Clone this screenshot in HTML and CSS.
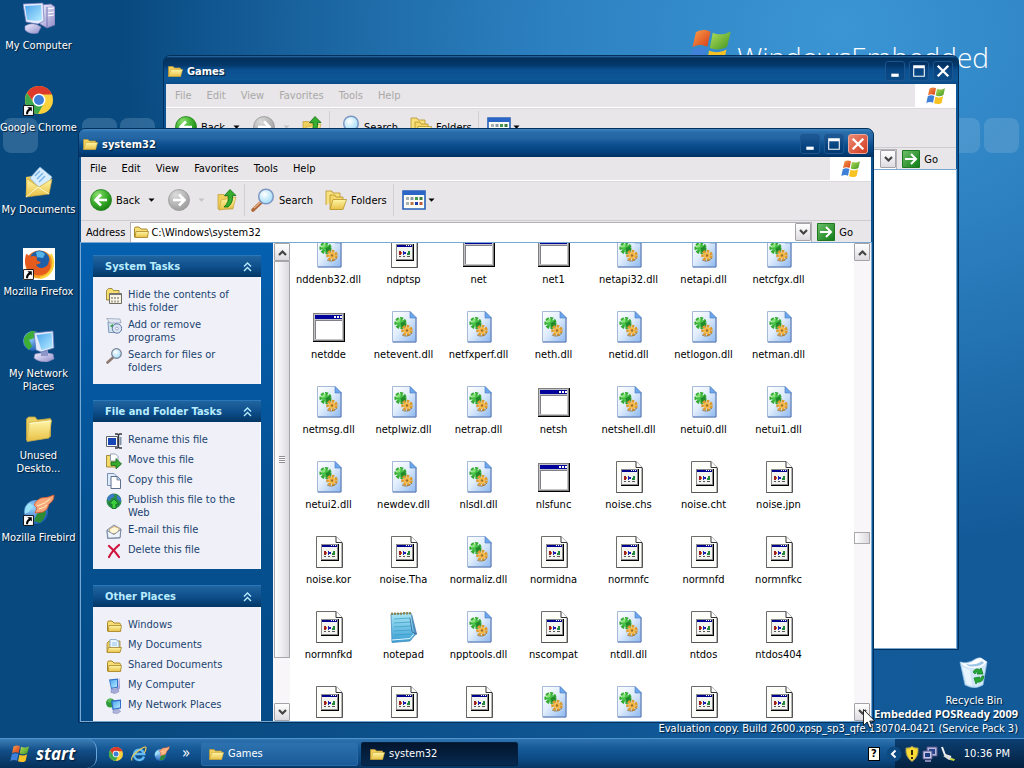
FILE: index.html
```html
<!DOCTYPE html>
<html lang="en">
  <head>
    <meta charset="UTF-8" />
    <meta name="viewport" content="width=device-width, initial-scale=1.0" />
    <title>Desktop</title>
    <link rel="stylesheet" href="styles.css">
  </head>
  <body>
    <!-- icon sprite -->
    <svg class="sprite" width="0" height="0" aria-hidden="true">
      <defs>
        <linearGradient id="g-page" x1="0" y1="0" x2="1" y2="1"><stop offset="0" stop-color="#fff" /><stop offset=".45" stop-color="#e2eefc" /><stop offset="1" stop-color="#8db8f0" /></linearGradient>
        <linearGradient id="g-folder" x1="0" y1="0" x2="0" y2="1"><stop offset="0" stop-color="#fff6a8" /><stop offset="1" stop-color="#e8c044" /></linearGradient>
        <linearGradient id="g-screen" x1="0" y1="0" x2="1" y2="1"><stop offset="0" stop-color="#4aa4ee" /><stop offset="1" stop-color="#b6ecff" /></linearGradient>
        <linearGradient id="g-case" x1="0" y1="0" x2="1" y2="1"><stop offset="0" stop-color="#f2f1ff" /><stop offset="1" stop-color="#8f8cc8" /></linearGradient>
        <linearGradient id="g-go" x1="0" y1="0" x2="1" y2="1"><stop offset="0" stop-color="#6fc06a" /><stop offset="1" stop-color="#0d7a14" /></linearGradient>
        <linearGradient id="g-red" x1="0" y1="0" x2="1" y2="1"><stop offset="0" stop-color="#f8a04c" /><stop offset="1" stop-color="#d83a16" /></linearGradient>
        <linearGradient id="g-green" x1="0" y1="0" x2="1" y2="1"><stop offset="0" stop-color="#b5e05a" /><stop offset="1" stop-color="#3f9422" /></linearGradient>
        <linearGradient id="g-note" x1="0" y1="0" x2="0" y2="1"><stop offset="0" stop-color="#a8e6f6" /><stop offset="1" stop-color="#3a9fd4" /></linearGradient>
        <radialGradient id="g-back" cx=".35" cy=".25" r=".85"><stop offset="0" stop-color="#8ee072" /><stop offset=".5" stop-color="#3cae2c" /><stop offset="1" stop-color="#13760f" /></radialGradient>
        <radialGradient id="g-fwd" cx=".35" cy=".25" r=".85"><stop offset="0" stop-color="#dcdcdc" /><stop offset="1" stop-color="#969696" /></radialGradient>
        <radialGradient id="g-lens" cx=".4" cy=".35" r=".7"><stop offset="0" stop-color="#fff" /><stop offset="1" stop-color="#9bdaf6" /></radialGradient>
        <radialGradient id="g-globe" cx=".35" cy=".3" r=".8"><stop offset="0" stop-color="#9fd8ff" /><stop offset="1" stop-color="#0d4fae" /></radialGradient>
        <radialGradient id="g-fox" cx=".4" cy=".4" r=".7"><stop offset=".4" stop-color="#e8641c" /><stop offset="1" stop-color="#ffc427" /></radialGradient>
      </defs>

      <symbol id="flag" viewBox="0 0 20 18">
        <path d="M3.500 1.500C6 .1 8 .3 10 1.300L8.600 8C6.400 7 4.300 7 2 8.200z" fill="url(#g-red)" />
        <path d="M11 1.800c2.500 1 5 1 8-.6L17.400 8c-2.700 1.500-5.200 1.500-7.700.6z" fill="url(#g-green)" />
        <path d="M1.800 9.200c2.400-1.200 4.500-1.200 6.600-.1L7 15.700C5 14.700 3 14.600.3 16z" fill="#3f80d8" />
        <path d="M9.400 9.700c2.400 1 4.900 1 7.700-.5l-1.500 6.700c-2.500 1.500-5 1.500-7.600.4z" fill="#f8c322" />
      </symbol>

      <symbol id="folder" viewBox="0 0 16 16">
        <path d="M1.500 13V4.500q0-1.500 1.500-1.500h3l2 2h5q1.500 0 1.500 1.500V13z" fill="#f6dd74" stroke="#a8862a" />
        <path d="M3 7.500h12.500l-1 6H2z" fill="url(#g-folder)" stroke="#a8862a" stroke-width=".8" />
      </symbol>

      <symbol id="folder-open" viewBox="0 0 16 16">
        <path d="M1.500 13V3.500h4.500l1.500 1.500h6V13z" fill="#f0cf5c" stroke="#c09a30" stroke-width=".7" />
        <path d="M4 6.500h11.600l-2 7H1.500z" fill="url(#g-folder)" stroke="#d0a838" stroke-width=".6" />
      </symbol>

      <symbol id="folder-big" viewBox="0 0 32 32">
        <path d="M3.500 28V7l2-2h6.500l2.500 3 13-1.500v18z" fill="#e9cf62" stroke="#c7a63e" stroke-width=".8" />
        <path d="M6 10.500L28.500 8 26 26 4 29.500z" fill="url(#g-folder)" stroke="#d3b34a" stroke-width=".8" />
        <path d="M6.500 11.500L27.500 9" stroke="#fffbd0" />
      </symbol>

      <symbol id="shortcut" viewBox="0 0 10 10">
        <path d="M.5.5h9v9h-9z" fill="#fff" stroke="#000" stroke-width=".8" />
        <path d="M4 2h4v4L6.800 4.800Q4.500 6 4.500 8.300H2.800Q2.500 5 5.300 3.300z" fill="#000" />
      </symbol>

      <symbol id="dll" viewBox="0 0 32 32">
        <path d="M4.500.5H22l6 6v24.500H4.500z" fill="url(#g-page)" stroke="#a5bad8" />
        <path d="M28 7v24H5" fill="none" stroke="#5577b4" />
        <path d="M22 .5l6.500 6.500H22z" fill="#6aa7ee" stroke="#4b79bd" stroke-width=".6" />
        <circle cx="12.500" cy="12" r="3.500" fill="#48c248" />
        <circle cx="12.500" cy="12" r="4.600" fill="none" stroke="#35ab33" stroke-width="3" stroke-dasharray="3 1.130" />
        <path d="M8 12q1-4 5-5l-1 4z" fill="#8ae27a" />
        <path d="M12.500 12l5-2v7l-4-1z" fill="#218a2a" />
        <circle cx="19" cy="19.500" r="4.300" fill="none" stroke="#dd9a2c" stroke-width="3" stroke-dasharray="2.700 1.150" />
        <circle cx="19" cy="19.500" r="3.300" fill="#f6bb4c" />
        <circle cx="19" cy="19.500" r="1.200" fill="#9c6f2a" />
        <path d="M14 24q5 3 10-2" fill="none" stroke="#8d7347" stroke-width=".8" />
      </symbol>

      <symbol id="exe" viewBox="0 0 32 32">
        <g shape-rendering="crispEdges">
          <path d="M0 2h32v29H0z" fill="#000" />
          <path d="M0 2h31v28H0z" fill="#808080" />
          <path d="M1 3h29v26H1z" fill="#c3c3c8" />
          <path d="M2 4h27v4H2z" fill="#00009a" />
          <path d="M21 5h2v2h-2zm3 0h2v2h-2zm3 0h2v2h-2z" fill="#fff" />
          <path d="M2 9h27v19H2z" fill="#808088" />
          <path d="M3 10h26v18H3z" fill="#fff" />
        </g>
      </symbol>

      <symbol id="cfg" viewBox="0 0 32 32">
        <path d="M3.500.5H23l6 6v25H3.500z" fill="#fdfdfa" stroke="#6c6c6c" />
        <path d="M23 .5v6h6" fill="#fff" stroke="#333" />
        <path d="M29.500 7v24.500h-26" fill="none" stroke="#555" />
        <g shape-rendering="crispEdges">
          <path d="M8 8h18v17H8z" fill="#000" />
          <path d="M8 8h17v16H8z" fill="#8c8c8c" />
          <path d="M9 9h15v14H9z" fill="#f3f3ef" />
          <path d="M9 9h15v2H9z" fill="#000090" />
          <path d="M18 9h1v1h-1zm2 0h1v1h-1zm2 0h1v1h-1z" fill="#fff" />
          <path d="M11 15h2v4h-2z" fill="#9c2020" />
          <path d="M13 16h1v2h-1z" fill="#e06020" />
          <path d="M15 15h1v4h-1zm1 1h2v2h-2z" fill="#2020b0" />
          <path d="M20 15h2v4h-3v-2h1z" fill="#208838" />
          <path d="M11 20h2v1h-2zm4 0h2v1h-2zm4 0h3v1h-3z" fill="#555" />
        </g>
      </symbol>

      <symbol id="notepad" viewBox="0 0 32 32">
        <path d="M24 3l5 20-3 2-4 1z" fill="#5688bb" />
        <path d="M3 3l20-1 4 22-5 6-18 1.500z" fill="url(#g-note)" stroke="#4a8cb8" stroke-width=".8" />
        <path d="M4 29l18-1.500 3.500-4" fill="none" stroke="#e2f6ff" />
        <path d="M6 8l16-1M6 12l17-1M6 16l18-1M6 20l18-1M6 24l18-1" stroke="#2f93c0" stroke-width=".6" />
        <path d="M22 7l2 14 5 2" fill="none" stroke="#3b6a9c" stroke-width=".8" />
        <path d="M4 4V1.500M7 4V1.500M10 4V1.500M13 4V1.500M16 3.500V1M19 3.500V1M22 3.500V1" stroke="#8b7c3a" stroke-width="1.600" />
      </symbol>

      <symbol id="back" viewBox="0 0 22 22">
        <circle cx="11" cy="11" r="10.500" fill="url(#g-back)" stroke="#1d7f17" stroke-width=".8" />
        <path d="M17 11H6M11 5.500L5.500 11l5.500 5.500" fill="none" stroke="#fff" stroke-width="2.600" />
      </symbol>

      <symbol id="forward" viewBox="0 0 22 22">
        <circle cx="11" cy="11" r="10.500" fill="url(#g-fwd)" stroke="#999" stroke-width=".8" />
        <path d="M5 11h11M11 5.500l5.500 5.500-5.500 5.500" fill="none" stroke="#fff" stroke-width="2.600" />
      </symbol>

      <symbol id="up" viewBox="0 0 22 22">
        <path d="M2 8V5.500h6l1 2h8V20H2z" fill="#f0cf5c" stroke="#bf9b35" stroke-width=".7" />
        <path d="M5 11l15-3-3 11-14 2z" fill="url(#g-folder)" stroke="#c9a43a" stroke-width=".7" />
        <path d="M14 .5l6 6h-3.500q1 7-4.500 11.500H8Q13.500 13 12 6.500H8.500z" fill="#36ad31" stroke="#12700f" stroke-width=".8" />
      </symbol>

      <symbol id="search" viewBox="0 0 24 24">
        <path d="M10 14.500l-8 7.500" stroke="#b06a3c" stroke-width="3.600" stroke-linecap="round" />
        <path d="M10 13.500l-7 6.500" stroke="#e8b48c" stroke-width="1.200" />
        <circle cx="15" cy="8.500" r="7.300" fill="url(#g-lens)" stroke="#7d97c4" stroke-width="1.500" />
      </symbol>

      <symbol id="search-small" viewBox="0 0 16 16">
        <path d="M7 9.500L1.500 14.500" stroke="#8e7872" stroke-width="2.600" stroke-linecap="round" />
        <circle cx="10.500" cy="5.500" r="4.800" fill="url(#g-lens)" stroke="#777f91" stroke-width="1.200" />
      </symbol>

      <symbol id="folders" viewBox="0 0 22 22">
        <path d="M1 16V2h6l1 2h7v4" fill="#f8e27e" stroke="#b8932c" stroke-width=".8" />
        <path d="M5 20V6h5l1 2h7v12z" fill="#f5d968" stroke="#b8932c" stroke-width=".8" />
        <path d="M8 10.500h13.500L18 20.500H5z" fill="url(#g-folder)" stroke="#b8932c" stroke-width=".8" />
      </symbol>

      <symbol id="views" viewBox="0 0 24 20">
        <path d="M1 1h22v18H1z" fill="#fdfdf6" stroke="#2760b8" stroke-width="1.600" />
        <path d="M1 1h22v4H1z" fill="#2b66c6" />
        <path d="M4 7h3v3H4zm0 5h3v3H4z" fill="#a9b2b0" />
        <path d="M8.500 7h3v3h-3z" fill="#8b98a8" /><path d="M13 7h3v3h-3z" fill="#3f9a4c" /><path d="M17.500 7h3v3h-3z" fill="#3c7a42" />
        <path d="M8.500 12h3v3h-3z" fill="#b8764a" /><path d="M13 12h3v3h-3z" fill="#1f3da8" /><path d="M17.500 12h3v3h-3z" fill="#c0573c" />
      </symbol>

      <symbol id="go" viewBox="0 0 18 18">
        <path d="M.5.500h17v17H.5z" fill="url(#g-go)" stroke="#1d7a22" />
        <path d="M3 9h10.500M9 4l5 5-5 5" fill="none" stroke="#fff" stroke-width="2" />
      </symbol>

      <symbol id="computer" viewBox="0 0 32 32">
        <path d="M17 3l11-1 4 3v18l-8 3-7-4z" fill="url(#g-case)" stroke="#716fae" stroke-width=".7" />
        <path d="M24 7l7-1M24 11l7-1M24 14l7-1" stroke="#fff" />
        <path d="M24 5v20" stroke="#7472b4" />
        <path d="M2 24q8-5 16 1l-3 6q-8 2-13-3z" fill="url(#g-case)" stroke="#8886c0" stroke-width=".6" />
        <path d="M0 2l20-1 1 18-6 3L3 20z" fill="#e9ecff" stroke="#6c7ab8" stroke-width=".7" />
        <path d="M2 4l16-1 1 15-5 1-10-1z" fill="url(#g-screen)" />
      </symbol>

      <symbol id="computer-small" viewBox="0 0 16 16">
        <path d="M10 1l4-.5v10L10 13z" fill="url(#g-case)" />
        <path d="M3 1.500l9-1v9l-7 1.500z" fill="#336fc8" />
        <path d="M4 2.500l7-.8v7l-5.500 1z" fill="url(#g-screen)" />
        <path d="M5 11.500l7-1 1 3-4 2-4-1z" fill="#a7acd8" stroke="#6f79b1" stroke-width=".5" />
      </symbol>

      <symbol id="network-small" viewBox="0 0 16 16">
        <circle cx="4.500" cy="5" r="4.500" fill="#2f9a3c" />
        <path d="M1 3q2-3 5-2L4 5z" fill="#59c254" />
        <path d="M5 2.500l10-1v9L6.500 12z" fill="#336fc8" />
        <path d="M6.500 3.800l7.500-.8v6.500l-6.500 1z" fill="url(#g-screen)" />
        <path d="M7 12.500l6-1 1.500 2-3 2-4.500-.5z" fill="#b4b8dd" stroke="#6f79b1" stroke-width=".5" />
      </symbol>

      <symbol id="chrome" viewBox="0 0 32 32">
        <circle cx="16" cy="16" r="14" fill="#fbd23c" />
        <path d="M4 9A14 14 0 0 1 29 10.500H16A6 6 0 0 0 10.500 18z" fill="#dd3a2c" />
        <path d="M4 9A14 14 0 0 0 15 30l6-11a6.500 6.500 0 0 1-10.500-.5z" fill="#3da84e" />
        <circle cx="16" cy="16" r="6.500" fill="#fff" /><circle cx="16" cy="16" r="5" fill="#3f7fd8" />
      </symbol>

      <symbol id="documents" viewBox="0 0 32 32">
        <path d="M3 30V11l6-1 2 2 15-2v14z" fill="#e8c95a" />
        <path d="M7 12L17 1l12 10-9 15z" fill="#d6edff" stroke="#86aed6" stroke-width=".8" />
        <path d="M12 10l5-5M14 13l6-6M16 16l6-6" stroke="#7ab4e8" stroke-width="1.500" />
        <path d="M3 31L4 13l12 8 13-8-3 15z" fill="url(#g-folder)" stroke="#d0a93e" stroke-width=".7" />
        <path d="M3 31l12-10 11 7" fill="none" stroke="#fff9c8" />
      </symbol>

      <symbol id="documents-small" viewBox="0 0 16 16">
        <path d="M1 14V5l2-2h11v11z" fill="#e9cd61" stroke="#a8862a" stroke-width=".8" />
        <path d="M4 10V1.500h6L13 4v6z" fill="#e8f5ff" stroke="#7c9fc4" stroke-width=".8" />
        <path d="M6 5h5M6 7h5" stroke="#89b8df" stroke-width=".8" />
        <path d="M1 14.500L2.500 9.500h13L14 14.500z" fill="url(#g-folder)" stroke="#a8862a" stroke-width=".8" />
      </symbol>

      <symbol id="firefox" viewBox="0 0 32 32">
        <path d="M0 0h32v32H0z" fill="#fff" />
        <circle cx="16.500" cy="16.500" r="14" fill="url(#g-fox)" />
        <circle cx="16.500" cy="12.500" r="10" fill="#1d5fa8" />
        <path d="M13 4q6-2 9 2l-2 4-6-1z" fill="#55b4e8" />
        <path d="M3 6q3 1 4 3 3-2 7 0-1 3 1 4l3 1q-2 3-5 2.500 2 4.500 8 3 5-2 5-8 4 9-3 14-8 4-15-1Q1 19 2 11z" fill="#e65c1e" />
        <path d="M28 6q4 8 1 15-4 8-12 9" fill="none" stroke="#ffd53c" stroke-width="2" />
      </symbol>

      <symbol id="network" viewBox="0 0 32 32">
        <circle cx="10" cy="11" r="10" fill="url(#g-globe)" />
        <path d="M3 5q6-6 10-3l-2 6-5 2 3 6-3 4Q0 15 1 8z" fill="#3eae35" />
        <path d="M12 24q9-3 18 0l1 5-7 3q-9 0-13-4z" fill="url(#g-case)" stroke="#8886c0" stroke-width=".6" />
        <path d="M18 20h7v6h-7z" fill="#8d97c8" />
        <path d="M11 3l19-2 1 17-13 4-5-2z" fill="#e2eaff" stroke="#5e79b8" stroke-width=".8" />
        <path d="M13.500 5l15-2 1 14-11 3z" fill="url(#g-screen)" />
      </symbol>

      <symbol id="firebird" viewBox="0 0 32 32">
        <circle cx="13" cy="18" r="12" fill="url(#g-globe)" />
        <path d="M14 20l8-5q3 7-5 14l-6-2z" fill="#2d8b35" />
        <path d="M2 20q-1-8 5-11l3 3-4 6z" fill="#9ce2f6" />
        <path d="M31 1q0 6-5 9-1 6-6 8l-8 1 2-5-3-3q2-5 7-7 7 0 13-3z" fill="#f7a779" stroke="#d95b2c" stroke-width=".8" />
        <path d="M14 12q8-2 13-7M16 15q5-1 8-4" fill="none" stroke="#fff0bc" />
      </symbol>

      <symbol id="ie" viewBox="0 0 16 16">
        <path d="M13 10.500A5.200 5.200 0 1 1 13.200 8H4" fill="none" stroke="#63b9f4" stroke-width="2.400" />
        <path d="M1 14.500Q-1 11 7 5t8-3q0 3-2 5" fill="none" stroke="#f4cf52" stroke-width="1.100" />
      </symbol>

      <symbol id="recycle" viewBox="0 0 32 32">
        <path d="M2 5q6 2 12-1 6-4 9-3l6 4-4 23q-6 4-13 2l-5-2z" fill="#cfe6f8" stroke="#8dbce2" stroke-width=".7" />
        <path d="M2 5q6 3 12 0 5-4 9-4l6 4q-5 6-13 6-9 0-14-6z" fill="#fff" />
        <path d="M8 7q9 2 16-3l2 2q-6 5-16 3z" fill="#9cc6e8" />
        <path d="M4 10l5 17 5 2-2-16z" fill="#eef7ff" opacity=".8" />
        <path d="M15 15q3-5 7-2l1-2 2 6h-6l1-2q-2-1-3 2zM26 19q-1 7-7 6l-1 2-2-6 6-1-1 2q2 1 3-3z" fill="#26a636" stroke="#118423" stroke-width=".8" />
      </symbol>

      <symbol id="hide" viewBox="0 0 16 16">
        <path d="M.5 12V2.500l2-2H6l1.500 2H13V12z" fill="#f4dd6a" stroke="#8b7730" stroke-width=".8" />
        <path d="M3.500 5.500h12v10h-12z" fill="#f7f4e5" stroke="#6f6c61" />
        <path d="M3.500 5.500h12V7h-12z" fill="#777" />
        <path d="M6 9v2M9 9v2M12 9v2M6 12.500v2M9 12.500v2M12 12.500v2" stroke="#8d8a7c" stroke-width="1.400" />
      </symbol>

      <symbol id="addremove" viewBox="0 0 16 16">
        <path d="M2 4h8v10.500H2.800z" fill="#cfe3ef" stroke="#7998b4" />
        <path d="M.5.500L14 1l1 4H4z" fill="#dfe6f0" stroke="#8e9bb2" stroke-width=".7" />
        <path d="M4 8l3-2v4z" fill="#32a13d" />
        <circle cx="11" cy="10.500" r="4.700" fill="#dbe4f4" stroke="#5f77a5" />
        <circle cx="11" cy="10.500" r="1.400" fill="#fff" stroke="#7d8fb4" stroke-width=".7" />
      </symbol>

      <symbol id="rename" viewBox="0 0 16 16">
        <path d="M.5 3.500h11v10H.5z" fill="#fff" stroke="#60666e" />
        <path d="M2 5h8v7H2z" fill="#1747b5" />
        <path d="M9 1h2.500l1 1 1-1H16M12.500 2v12M9 15h2.500l1-1 1 1H16" fill="none" stroke="#34383f" stroke-width="1.300" />
        <path d="M14.500 4v8" stroke="#8290a8" stroke-width="2" />
      </symbol>

      <symbol id="move" viewBox="0 0 16 16">
        <path d="M.5 14V2.500H5L6.500 4H11v10z" fill="#f2db68" stroke="#907628" stroke-width=".8" />
        <path d="M4.500 1h5L12 3.500V8H4.500z" fill="#fff" stroke="#7c8ba8" stroke-width=".8" />
        <path d="M5 9h5V5.500l5.500 5.500L10 15.800V12.500H5z" fill="#36ac2f" stroke="#17621a" stroke-width=".8" />
      </symbol>

      <symbol id="copy" viewBox="0 0 16 16">
        <path d="M1.500.5h6.500l2 2v10H1.500z" fill="#dfecfb" stroke="#6b86ac" stroke-width=".9" />
        <path d="M5 3.500h6.500L14.500 6.500v9H5z" fill="#fff" stroke="#4d6180" stroke-width=".9" />
        <path d="M11 3.500V7h3.500" fill="#b8d3f2" stroke="#4d6180" stroke-width=".7" />
      </symbol>

      <symbol id="publish" viewBox="0 0 16 16">
        <circle cx="8" cy="8" r="7.500" fill="#2a8c4a" />
        <path d="M1 6q1-4 6-5.500L9 3 5 5.500 3 8zM11 2l4 3v4l-4-3z" fill="#3d79c9" />
        <path d="M8 6l5 5h-3v4.500H6V11H3z" fill="#3cd03c" stroke="#116a20" stroke-width=".8" />
      </symbol>

      <symbol id="email" viewBox="0 0 16 16">
        <path d="M1 7l7-5 7 4-1 9-12.500.5z" fill="#c9d6e8" stroke="#6c7c98" stroke-width=".8" />
        <path d="M3.500 6L8 3.500 13 5l-1 5-8 1z" fill="#fff7d6" stroke="#d0a058" stroke-width=".8" />
        <path d="M1 7.500l7 4 6.800-5L14 14.500l-12 .7z" fill="#eef4fc" stroke="#6c7c98" stroke-width=".8" />
      </symbol>

      <symbol id="delete" viewBox="0 0 16 16">
        <path d="M3 3q6 5 10 11M13 2Q6 8 3 14" fill="none" stroke="#d0143c" stroke-width="2.200" stroke-linecap="round" />
      </symbol>

      <symbol id="collapse" viewBox="0 0 9 10">
        <path d="M1 4.500l3.500-3.500L8 4.500M1 9l3.500-3.500L8 9" fill="none" stroke="currentColor" stroke-width="1.400" />
      </symbol>

      <symbol id="chev-up" viewBox="0 0 9 7"><path d="M1 6l3.500-3.500L8 6" fill="none" stroke="currentColor" stroke-width="2.200" /></symbol>
      <symbol id="chev-down" viewBox="0 0 9 7"><path d="M1 1l3.500 3.500L8 1" fill="none" stroke="currentColor" stroke-width="2.200" /></symbol>
      <symbol id="caret" viewBox="0 0 7 4"><path d="M.5.500h6L3.500 3.800z" fill="currentColor" /></symbol>
      <symbol id="min" viewBox="0 0 17 17"><path d="M5 11h7v3H5z" fill="#fff" /></symbol>
      <symbol id="max" viewBox="0 0 17 17"><path d="M3 3h11v11H3zM4 6v7h9V6z" fill="#fff" fill-rule="evenodd" /></symbol>
      <symbol id="close" viewBox="0 0 17 17"><path d="M3.500 3.500l10 10M13.500 3.500l-10 10" stroke="#fff" stroke-width="2.200" /></symbol>
    </svg>

    <div class="desktop">
      <div class="tile tile-a"></div>
      <div class="tile tile-b"></div>
      <div class="tile tile-c"></div>
      <div class="tile tile-d"></div>
      <div class="tile tile-e"></div>

      <div class="brand">
        <svg class="brand-flag"><use href="#flag" /></svg>
        <span>WindowsEmbedded</span>
      </div>

      <div class="shortcuts">
        <a class="shortcut" href="#"><svg class="icon-32"><use href="#computer" /></svg>My Computer</a>
        <a class="shortcut" href="#"><svg class="icon-32"><use href="#chrome" /></svg><svg class="arrow"><use href="#shortcut" /></svg>Google Chrome</a>
        <a class="shortcut" href="#"><svg class="icon-32"><use href="#documents" /></svg>My Documents</a>
        <a class="shortcut" href="#"><svg class="icon-32"><use href="#firefox" /></svg><svg class="arrow"><use href="#shortcut" /></svg>Mozilla Firefox</a>
        <a class="shortcut" href="#"><svg class="icon-32"><use href="#network" /></svg>My Network<br>Places</a>
        <a class="shortcut" href="#"><svg class="icon-32"><use href="#folder-big" /></svg>Unused<br>Deskto...</a>
        <a class="shortcut" href="#"><svg class="icon-32"><use href="#firebird" /></svg><svg class="arrow"><use href="#shortcut" /></svg>Mozilla Firebird</a>
      </div>

      <div class="corner">
        <a class="shortcut" href="#"><svg class="icon-32"><use href="#recycle" /></svg>Recycle Bin</a>
        <div class="edition">Embedded POSReady 2009</div>
        <div class="build">Evaluation copy. Build 2600.xpsp_sp3_qfe.130704-0421 (Service Pack 3)</div>
      </div>

      <!-- Games window -->
      <section class="window games inactive">
        <header class="title-bar">
          <svg class="icon-16"><use href="#folder-open" /></svg>
          <h2>Games</h2>
          <button class="caption" aria-label="Minimize"><svg><use href="#min" /></svg></button>
          <button class="caption" aria-label="Maximize"><svg><use href="#max" /></svg></button>
          <button class="caption" aria-label="Close"><svg><use href="#close" /></svg></button>
        </header>
        <nav class="menu-bar">
          <button>File</button><button>Edit</button><button>View</button><button>Favorites</button><button>Tools</button><button>Help</button>
          <span class="throbber"><svg><use href="#flag" /></svg></span>
        </nav>
        <div class="toolbar">
          <button class="tool"><svg class="icon-22"><use href="#back" /></svg>Back</button>
          <button class="drop" aria-label="Back history"><svg><use href="#caret" /></svg></button>
          <button class="tool" aria-label="Forward"><svg class="icon-22"><use href="#forward" /></svg></button>
          <button class="drop dim" aria-label="Forward history"><svg><use href="#caret" /></svg></button>
          <button class="tool" aria-label="Up"><svg class="icon-22"><use href="#up" /></svg></button>
          <span class="divider"></span>
          <button class="tool"><svg class="icon-24"><use href="#search" /></svg>Search</button>
          <button class="tool"><svg class="icon-22"><use href="#folders" /></svg>Folders</button>
          <span class="divider"></span>
          <button class="tool views" aria-label="Views"><svg class="icon-24"><use href="#views" /></svg><svg class="caret"><use href="#caret" /></svg></button>
        </div>
        <div class="address-bar">
          <div class="combo">
            <svg class="icon-16"><use href="#folder" /></svg>
            <input type="text" aria-label="Address">
            <button aria-label="Show addresses"><svg><use href="#chev-down" /></svg></button>
          </div>
          <button class="go"><svg><use href="#go" /></svg>Go</button>
        </div>
        <div class="content"></div>
      </section>

      <!-- system32 window -->
      <section class="window system">
        <header class="title-bar">
          <svg class="icon-16"><use href="#folder-open" /></svg>
          <h2>system32</h2>
          <button class="caption" aria-label="Minimize"><svg><use href="#min" /></svg></button>
          <button class="caption" aria-label="Maximize"><svg><use href="#max" /></svg></button>
          <button class="caption close" aria-label="Close"><svg><use href="#close" /></svg></button>
        </header>
        <nav class="menu-bar">
          <button>File</button><button>Edit</button><button>View</button><button>Favorites</button><button>Tools</button><button>Help</button>
          <span class="throbber"><svg><use href="#flag" /></svg></span>
        </nav>
        <div class="toolbar">
          <button class="tool"><svg class="icon-22"><use href="#back" /></svg>Back</button>
          <button class="drop" aria-label="Back history"><svg><use href="#caret" /></svg></button>
          <button class="tool" aria-label="Forward"><svg class="icon-22"><use href="#forward" /></svg></button>
          <button class="drop dim" aria-label="Forward history"><svg><use href="#caret" /></svg></button>
          <button class="tool" aria-label="Up"><svg class="icon-22"><use href="#up" /></svg></button>
          <span class="divider"></span>
          <button class="tool"><svg class="icon-24"><use href="#search" /></svg>Search</button>
          <button class="tool"><svg class="icon-22"><use href="#folders" /></svg>Folders</button>
          <span class="divider"></span>
          <button class="tool views" aria-label="Views"><svg class="icon-24"><use href="#views" /></svg><svg class="caret"><use href="#caret" /></svg></button>
        </div>
        <div class="address-bar">
          <label for="address">Address</label>
          <div class="combo">
            <svg class="icon-16"><use href="#folder" /></svg>
            <input id="address" type="text" value="C:\Windows\system32">
            <button aria-label="Show addresses"><svg><use href="#chev-down" /></svg></button>
          </div>
          <button class="go"><svg><use href="#go" /></svg>Go</button>
        </div>

        <div class="content">
          <aside class="tasks">
            <div class="panel">
              <button class="panel-title">System Tasks<svg><use href="#collapse" /></svg></button>
              <div class="panel-body">
                <a href="#"><svg class="icon-16"><use href="#hide" /></svg><span>Hide the contents of this folder</span></a>
                <a href="#"><svg class="icon-16"><use href="#addremove" /></svg><span>Add or remove programs</span></a>
                <a href="#"><svg class="icon-16"><use href="#search-small" /></svg><span>Search for files or folders</span></a>
              </div>
            </div>
            <div class="panel">
              <button class="panel-title">File and Folder Tasks<svg><use href="#collapse" /></svg></button>
              <div class="panel-body">
                <a href="#"><svg class="icon-16"><use href="#rename" /></svg><span>Rename this file</span></a>
                <a href="#"><svg class="icon-16"><use href="#move" /></svg><span>Move this file</span></a>
                <a href="#"><svg class="icon-16"><use href="#copy" /></svg><span>Copy this file</span></a>
                <a href="#"><svg class="icon-16"><use href="#publish" /></svg><span>Publish this file to the Web</span></a>
                <a href="#"><svg class="icon-16"><use href="#email" /></svg><span>E-mail this file</span></a>
                <a href="#"><svg class="icon-16"><use href="#delete" /></svg><span>Delete this file</span></a>
              </div>
            </div>
            <div class="panel">
              <button class="panel-title">Other Places<svg><use href="#collapse" /></svg></button>
              <div class="panel-body">
                <a href="#"><svg class="icon-16"><use href="#folder" /></svg><span>Windows</span></a>
                <a href="#"><svg class="icon-16"><use href="#documents-small" /></svg><span>My Documents</span></a>
                <a href="#"><svg class="icon-16"><use href="#folder" /></svg><span>Shared Documents</span></a>
                <a href="#"><svg class="icon-16"><use href="#computer-small" /></svg><span>My Computer</span></a>
                <a href="#"><svg class="icon-16"><use href="#network-small" /></svg><span>My Network Places</span></a>
              </div>
            </div>
          </aside>

          <div class="scrollbar">
            <button aria-label="Scroll up"><svg><use href="#chev-up" /></svg></button>
            <div class="thumb tall"><i></i></div>
            <div class="track"></div>
            <button aria-label="Scroll down"><svg><use href="#chev-down" /></svg></button>
          </div>

          <div class="files">
            <div class="file"><svg class="icon-32"><use href="#dll" /></svg>nddenb32.dll</div>
            <div class="file"><svg class="icon-32"><use href="#cfg" /></svg>ndptsp</div>
            <div class="file"><svg class="icon-32"><use href="#exe" /></svg>net</div>
            <div class="file"><svg class="icon-32"><use href="#exe" /></svg>net1</div>
            <div class="file"><svg class="icon-32"><use href="#dll" /></svg>netapi32.dll</div>
            <div class="file"><svg class="icon-32"><use href="#dll" /></svg>netapi.dll</div>
            <div class="file"><svg class="icon-32"><use href="#dll" /></svg>netcfgx.dll</div>

            <div class="file"><svg class="icon-32"><use href="#exe" /></svg>netdde</div>
            <div class="file"><svg class="icon-32"><use href="#dll" /></svg>netevent.dll</div>
            <div class="file"><svg class="icon-32"><use href="#dll" /></svg>netfxperf.dll</div>
            <div class="file"><svg class="icon-32"><use href="#dll" /></svg>neth.dll</div>
            <div class="file"><svg class="icon-32"><use href="#dll" /></svg>netid.dll</div>
            <div class="file"><svg class="icon-32"><use href="#dll" /></svg>netlogon.dll</div>
            <div class="file"><svg class="icon-32"><use href="#dll" /></svg>netman.dll</div>

            <div class="file"><svg class="icon-32"><use href="#dll" /></svg>netmsg.dll</div>
            <div class="file"><svg class="icon-32"><use href="#dll" /></svg>netplwiz.dll</div>
            <div class="file"><svg class="icon-32"><use href="#dll" /></svg>netrap.dll</div>
            <div class="file"><svg class="icon-32"><use href="#exe" /></svg>netsh</div>
            <div class="file"><svg class="icon-32"><use href="#dll" /></svg>netshell.dll</div>
            <div class="file"><svg class="icon-32"><use href="#dll" /></svg>netui0.dll</div>
            <div class="file"><svg class="icon-32"><use href="#dll" /></svg>netui1.dll</div>

            <div class="file"><svg class="icon-32"><use href="#dll" /></svg>netui2.dll</div>
            <div class="file"><svg class="icon-32"><use href="#dll" /></svg>newdev.dll</div>
            <div class="file"><svg class="icon-32"><use href="#dll" /></svg>nlsdl.dll</div>
            <div class="file"><svg class="icon-32"><use href="#exe" /></svg>nlsfunc</div>
            <div class="file"><svg class="icon-32"><use href="#cfg" /></svg>noise.chs</div>
            <div class="file"><svg class="icon-32"><use href="#cfg" /></svg>noise.cht</div>
            <div class="file"><svg class="icon-32"><use href="#cfg" /></svg>noise.jpn</div>

            <div class="file"><svg class="icon-32"><use href="#cfg" /></svg>noise.kor</div>
            <div class="file"><svg class="icon-32"><use href="#cfg" /></svg>noise.Tha</div>
            <div class="file"><svg class="icon-32"><use href="#dll" /></svg>normaliz.dll</div>
            <div class="file"><svg class="icon-32"><use href="#cfg" /></svg>normidna</div>
            <div class="file"><svg class="icon-32"><use href="#cfg" /></svg>normnfc</div>
            <div class="file"><svg class="icon-32"><use href="#cfg" /></svg>normnfd</div>
            <div class="file"><svg class="icon-32"><use href="#cfg" /></svg>normnfkc</div>

            <div class="file"><svg class="icon-32"><use href="#cfg" /></svg>normnfkd</div>
            <div class="file"><svg class="icon-32"><use href="#notepad" /></svg>notepad</div>
            <div class="file"><svg class="icon-32"><use href="#dll" /></svg>npptools.dll</div>
            <div class="file"><svg class="icon-32"><use href="#cfg" /></svg>nscompat</div>
            <div class="file"><svg class="icon-32"><use href="#dll" /></svg>ntdll.dll</div>
            <div class="file"><svg class="icon-32"><use href="#cfg" /></svg>ntdos</div>
            <div class="file"><svg class="icon-32"><use href="#cfg" /></svg>ntdos404</div>

            <div class="file"><svg class="icon-32"><use href="#cfg" /></svg></div>
            <div class="file"><svg class="icon-32"><use href="#cfg" /></svg></div>
            <div class="file"><svg class="icon-32"><use href="#cfg" /></svg></div>
            <div class="file"><svg class="icon-32"><use href="#dll" /></svg></div>
            <div class="file"><svg class="icon-32"><use href="#dll" /></svg></div>
            <div class="file"><svg class="icon-32"><use href="#cfg" /></svg></div>
            <div class="file"><svg class="icon-32"><use href="#cfg" /></svg></div>
          </div>

          <div class="scrollbar">
            <button aria-label="Scroll up"><svg><use href="#chev-up" /></svg></button>
            <div class="track before"></div>
            <div class="thumb"></div>
            <div class="track"></div>
            <button aria-label="Scroll down"><svg><use href="#chev-down" /></svg></button>
          </div>
        </div>
      </section>

      <svg class="pointer" viewBox="0 0 12 20"><path d="M.5.500v16l3.700-3.500 2.500 6 2.500-1-2.500-6h5z" fill="#fff" stroke="#000" stroke-width=".8" /></svg>
    </div>

    <footer class="taskbar">
      <button class="start"><svg><use href="#flag" /></svg>start</button>
      <div class="quick">
        <button aria-label="Google Chrome"><svg class="icon-16"><use href="#chrome" /></svg></button>
        <button aria-label="Internet Explorer"><svg class="icon-16"><use href="#ie" /></svg></button>
        <button aria-label="Mozilla Firebird"><svg class="icon-16"><use href="#firebird" /></svg></button>
        <button class="more">»</button>
      </div>
      <div class="buttons">
        <button class="task"><svg class="icon-16"><use href="#folder-open" /></svg>Games</button>
        <button class="task pressed"><svg class="icon-16"><use href="#folder-open" /></svg>system32</button>
      </div>
      <button class="help">?</button>
      <div class="tray">
        <button aria-label="Show hidden icons">
          <svg class="icon-16" viewBox="0 0 16 16"><circle cx="8" cy="8" r="7.500" fill="#0d4a82" /><path d="M9.500 4.500L6 8l3.500 3.500" fill="none" stroke="#fff" stroke-width="2" /></svg>
        </button>
        <svg class="icon-16" viewBox="0 0 16 16"><path d="M8 .5q3 2 6 1.500 1 9-6 13.500Q1 11 2 2q3 .5 6-1.500z" fill="#f9d934" stroke="#9b9358" /><path d="M8 4v5M8 11v2" stroke="#33290a" stroke-width="2" /></svg>
        <svg class="icon-16" viewBox="0 0 16 16"><path d="M5 1h10v9H5z" fill="#b6b5da" stroke="#55548c" /><path d="M7 3h6v5H7z" fill="#26458e" /><path d="M1 5h9v8H1z" fill="#c8c7e6" stroke="#55548c" /><path d="M3 7h5v4H3z" fill="#1f3c82" /><path d="M3 15h6" stroke="#aaa9d0" stroke-width="1.500" /></svg>
        <svg class="icon-16" viewBox="0 0 16 16"><path d="M2 1l3 8 6 2" fill="none" stroke="#f2f2f2" stroke-width="2" /><path d="M3 10l5-1 5 4-4 1z" fill="#ddd" /><path d="M10 12l5 1-1 2-4-1z" fill="#c3d63a" /></svg>
        <time>10:36 PM</time>
      </div>
    </footer>
  </body>
</html>
```

FILE: styles.css
```css
:root {
  --face: #e8e6e8;
  --line: #b4b2b6;
  --frame: #0b5496;
  --frame-dark: #02305a;
  --link: #1a4470;
}

* {
  margin: 0;
  padding: 0;
  box-sizing: border-box;
}

body {
  display: flex;
  flex-direction: column;
  height: 100vh;
  overflow: hidden;
  font-family: "DejaVu Sans Condensed", "DejaVu Sans", Tahoma, sans-serif;
  font-size: 11px;
  line-height: 13px;
  color: #000;
}

button,
input {
  font: inherit;
  color: inherit;
  background: none;
  border: none;
}

a {
  color: inherit;
  text-decoration: none;
}

svg {
  display: block;
  flex: none;
}

.sprite {
  position: absolute;
}

.icon-16 {
  width: 16px;
  height: 16px;
}

.icon-22 {
  width: 22px;
  height: 22px;
}

.icon-24 {
  width: 24px;
  height: 24px;
}

.icon-32 {
  width: 32px;
  height: 32px;
}

/* Desktop */
.desktop {
  position: relative;
  flex: 1;
  overflow: hidden;
  background:
    radial-gradient(ellipse 720px 520px at 82% 4%, #3b95d4 0%, rgba(50, 136, 200, 0.85) 40%, rgba(20, 94, 156, 0) 100%),
    linear-gradient(90deg, #08497f 0%, #08497f 12%, #115999 70%, #135a98 100%);
}

.tile {
  position: absolute;
  top: 118px;
  width: 35px;
  height: 35px;
  border-radius: 8px;
  background: rgba(150, 190, 225, 0.25);
}

.tile-a {
  left: 3px;
}

.tile-b {
  left: 82px;
}

.tile-c {
  left: 120px;
}

.tile-d {
  right: 29px;
}

.tile-d {
  right: 44px;
}

.tile-e {
  right: 5px;
}

.brand {
  position: absolute;
  top: 28px;
  right: 35px;
  display: flex;
  gap: 4px;
  color: #fff;
  font-family: "Open Sans", "Noto Sans", sans-serif;
  font-size: 28px;
  font-weight: 300;
  line-height: 58px;
}

.brand-flag {
  width: 45px;
  height: 42px;
}

.shortcuts {
  position: absolute;
  top: 2px;
  left: 0;
  display: grid;
  grid-auto-rows: 82px;
  width: 77px;
}

.shortcut {
  position: relative;
  display: flex;
  flex-direction: column;
  align-items: center;
  color: #fff;
  text-align: center;
  text-shadow: 1px 1px 1px #021a33;
  white-space: nowrap;
}

.shortcut .icon-32 {
  margin-bottom: 5px;
}

.shortcut .arrow {
  position: absolute;
  top: 21px;
  left: 23px;
  width: 11px;
  height: 11px;
}

.corner {
  position: absolute;
  right: 6px;
  bottom: 3px;
  display: flex;
  flex-direction: column;
  align-items: flex-end;
  color: #fff;
  text-shadow: 1px 1px 1px #021a33;
}

.corner .shortcut {
  width: 88px;
}

.edition {
  font-family: "Open Sans", "Noto Sans", sans-serif;
  font-weight: bold;
}

.build {
  margin-top: 2px;
}

/* Windows */
.window {
  position: absolute;
  display: flex;
  flex-direction: column;
  width: 796px;
  height: 595px;
  padding: 0 2px 1px;
  border: 1px solid var(--frame-dark);
  border-radius: 7px 7px 0 0;
  background: var(--frame);
}

.games {
  top: 55px;
  left: 163px;
}

.system {
  top: 128px;
  left: 78px;
}

.title-bar {
  display: flex;
  align-items: center;
  gap: 4px;
  height: 28px;
  margin: 0 -2px;
  padding: 2px 5px 0 3px;
  border-radius: 6px 6px 0 0;
  color: #fff;
  background: linear-gradient(#3f86c0 0, #2a6dab 3px, #2465a3 9px, #0b4f8f 16px, #013f78 24px, #023060 100%);
}

.inactive .title-bar {
  background: linear-gradient(#2d6fab 0, #03305c 2px, #04386a 9px, #0b5090 14px, #0d5796 24px, #0a4a86 100%);
}

.title-bar h2 {
  flex: 1;
  font-size: 11px;
  line-height: 13px;
  text-shadow: 1px 1px 1px #001c38;
}

.caption {
  width: 20px;
  height: 20px;
  border: 1px solid #1d558f;
  border-radius: 3px;
  background: rgba(0, 40, 90, 0.25);
}

.caption svg {
  width: 18px;
  height: 18px;
}

.caption.close {
  border-color: #f0a898;
  background: linear-gradient(135deg, #ee8a74, #cf3a20);
}

.menu-bar {
  display: flex;
  height: 24px;
  padding-left: 1px;
  border-bottom: 1px solid #fff;
  background: var(--face);
}

.menu-bar button {
  padding: 0 7px 0 8px;
}

.inactive .menu-bar button {
  color: #aaa8a8;
}

.throbber {
  display: flex;
  align-items: center;
  justify-content: center;
  width: 41px;
  margin-left: auto;
  background: #fff;
}

.throbber svg {
  width: 20px;
  height: 18px;
}

.toolbar {
  display: flex;
  align-items: center;
  height: 40px;
  padding: 0 7px 2px;
  border-top: 1px solid #dcd9dc;
  border-bottom: 1px solid #cfccd0;
  background: var(--face);
}

.tool {
  display: flex;
  align-items: center;
  gap: 4px;
  padding: 0 2px;
}

.tool + .tool {
  margin-left: 8px;
}

.drop {
  width: 24px;
  height: 22px;
  padding-left: 6px;
}

.drop svg,
.caret {
  width: 7px;
  height: 4px;
}

.drop.dim {
  width: 22px;
  color: #c4c2c4;
}

.divider {
  width: 1px;
  height: 32px;
  margin: 0 4px;
  background: #d2d0d3;
}

.tool.views {
  gap: 2px;
  padding-left: 4px;
}

.address-bar {
  display: flex;
  align-items: center;
  gap: 5px;
  height: 22px;
  padding-left: 5px;
  background: var(--face);
}

.combo {
  display: flex;
  flex: 1;
  align-items: center;
  gap: 2px;
  height: 21px;
  padding-left: 2px;
  border: 1px solid var(--line);
  background: #fff;
}

.combo input {
  flex: 1;
  min-width: 0;
}

.combo button,
.scrollbar button {
  display: flex;
  align-items: center;
  justify-content: center;
  width: 16px;
  height: 18px;
  border: 1px solid #a5a3a8;
  border-radius: 1px;
  color: #444;
  background: linear-gradient(#fff, #dddbe0);
}

.combo button svg,
.scrollbar button svg {
  width: 9px;
  height: 7px;
}

.go {
  display: flex;
  align-items: center;
  gap: 4px;
  padding-right: 18px;
}

.go svg {
  width: 18px;
  height: 18px;
}

.content {
  display: flex;
  flex: 1;
  min-height: 0;
  overflow: hidden;
  background: #fff;
  outline: 1px solid #77a9d2;
}

/* Task pane */
.tasks {
  display: flex;
  flex: none;
  flex-direction: column;
  gap: 16px;
  width: 192px;
  padding: 12px 12px 0;
  background: linear-gradient(#0560b0, #05508f 60%, #044b88);
}

.panel-title {
  display: flex;
  align-items: center;
  justify-content: space-between;
  width: 100%;
  height: 22px;
  padding: 0 9px 0 12px;
  border-top: 1px solid #2a78ba;
  color: #b8ecff;
  font-weight: bold;
  background: linear-gradient(#20659f, #0e4f8c 50%, #023664);
}

.panel-title svg {
  width: 9px;
  height: 10px;
}

.panel-body {
  display: flex;
  flex-direction: column;
  gap: 4px;
  padding: 11px 24px 10px 13px;
  border: solid #fff;
  border-width: 0 1px 0 0;
  color: var(--link);
  background: #f0f0f8;
}

.panel-body a {
  display: flex;
  gap: 6px;
}

/* Scrollbars */
.scrollbar {
  display: flex;
  flex: none;
  flex-direction: column;
  width: 17px;
  padding-left: 1px;
  background: #f8f6f8;
}

.files + .scrollbar {
  padding: 0 1px 0 0;
}

.thumb {
  display: flex;
  align-items: center;
  justify-content: center;
  width: 16px;
  height: 12px;
  border: 1px solid #a9a7ab;
  background: linear-gradient(90deg, #fff, #dcd9de);
}

.thumb.tall {
  height: 397px;
}

.thumb i {
  width: 6px;
  height: 7px;
  background: repeating-linear-gradient(#8f8d92 0 1px, #fff 1px 2px);
}

.track {
  flex: 1;
}

.track.before {
  flex: none;
  height: 271px;
}

/* File list */
.files {
  display: grid;
  flex: 1;
  grid-template-columns: repeat(auto-fill, 75px);
  grid-auto-rows: 75px;
  height: 600px;
  margin-top: -7px;
  padding-left: 1px;
}

.file {
  display: flex;
  flex-direction: column;
  align-items: center;
  gap: 5px;
  white-space: nowrap;
}

.pointer {
  position: absolute;
  top: 709px;
  left: 863px;
  width: 12px;
  height: 20px;
}

/* Taskbar */
.taskbar {
  display: flex;
  align-items: stretch;
  height: 30px;
  border-top: 1px solid #4f94cc;
  color: #fff;
  background: linear-gradient(#2f74b0, #175b99 30%, #0c4a85 70%, #063662);
}

.start {
  display: flex;
  align-items: center;
  gap: 6px;
  width: 97px;
  padding-left: 10px;
  border-right: 1px solid #6ba6d8;
  border-radius: 0 10px 10px 0;
  font-family: "Open Sans", "Noto Sans", sans-serif;
  font-size: 17px;
  font-style: italic;
  font-weight: bold;
  text-shadow: 1px 1px 2px #001830;
  background: linear-gradient(#3c7fb8, #124d86 40%, #06305a);
}

.start svg {
  width: 20px;
  height: 18px;
}

.quick {
  display: flex;
  align-items: center;
  gap: 7px;
  width: 104px;
  padding-left: 11px;
}

.quick .more {
  height: 26px;
  margin-left: 5px;
  font-size: 15px;
}

.buttons {
  display: flex;
  flex: 1;
  align-items: center;
  gap: 3px;
}

.task {
  display: flex;
  align-items: center;
  gap: 4px;
  width: 157px;
  height: 24px;
  padding-left: 6px;
  border: 1px solid #2a6aa6;
  border-radius: 2px;
  background: linear-gradient(#2d72b0, #1a5a98);
}

.task.pressed {
  padding-left: 7px;
  border-color: #04203f;
  background: linear-gradient(#02152d, #06294f);
}

.help {
  align-self: center;
  width: 12px;
  height: 14px;
  margin-right: 6px;
  border: 1px solid #000;
  color: #000;
  font-weight: bold;
  line-height: 12px;
  background: #fffff0;
}

.tray {
  display: flex;
  align-items: center;
  gap: 2px;
  padding: 0 14px 0 0;
  background: linear-gradient(#0b3f72, #03203f) no-repeat right / calc(100% - 9px) 100%;
}

.tray time {
  margin-left: 6px;
}
```
